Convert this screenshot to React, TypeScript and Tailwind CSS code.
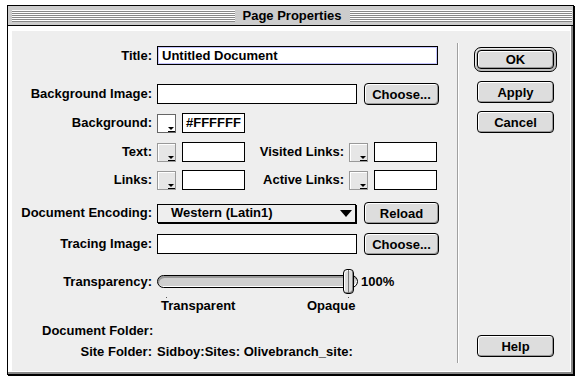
import React from "react";

function Btn({ children, className }: { children: React.ReactNode; className: string }) {
  return (
    <div
      className={
        "flex items-center justify-center border border-black rounded-[4px] bg-[#dddddd] shadow-[inset_1px_1px_0_#ffffff,inset_-1px_-1px_0_#999999] text-[13px] font-bold leading-none " +
        className
      }
    >
      {children}
    </div>
  );
}

function Swatch({ white }: { white?: boolean }) {
  return (
    <div
      className={
        white
          ? "relative w-[19px] h-[19px] border border-[#666666] bg-white shrink-0"
          : "relative w-[19px] h-[19px] border border-[#999999] bg-[#e6e6e6] shadow-[inset_1px_1px_0_#ffffff] shrink-0"
      }
    >
      <div className="absolute right-[1px] bottom-[2px] w-0 h-0 border-l-[3px] border-r-[3px] border-t-[3px] border-l-transparent border-r-transparent border-t-black" />
      <div className="absolute right-0 bottom-0 w-[7px] h-[1px] bg-black" />
    </div>
  );
}

function Field({ w, children }: { w: string; children?: React.ReactNode }) {
  return (
    <div className={"h-[20px] bg-white border border-black flex items-center pl-[3px] shrink-0 " + w}>{children}</div>
  );
}

function Label({ children }: { children: React.ReactNode }) {
  return <div className="w-[140px] text-right shrink-0">{children}</div>;
}

export default function App() {
  return (
    <div className="w-[585px] h-[389px] bg-white pt-[5px] pl-[7px] font-['Liberation_Sans',Arial,sans-serif] text-black text-[13px] font-bold leading-[14px]">
      <div className="w-[567px] h-[370px] border border-black shadow-[1px_1px_0_#000000] flex flex-col bg-[#cccccc]">
        {/* title bar */}
        <div className="h-[20px] border-b border-black flex items-center pl-[4px] pr-[1px] bg-[#cccccc] shrink-0">
          <div className="flex-1 h-[12px] bg-[repeating-linear-gradient(to_bottom,#ffffff_0px,#ffffff_1px,#888888_1px,#888888_2px)]" />
          <div className="mx-[8px] text-[13px] leading-[14px]">Page Properties</div>
          <div className="flex-1 h-[12px] bg-[repeating-linear-gradient(to_bottom,#ffffff_0px,#ffffff_1px,#888888_1px,#888888_2px)]" />
        </div>
        {/* body */}
        <div className="flex-1 bg-white pl-[4px] pt-[5px] pr-[1px] pb-[1px] border-r-2 border-b-2 border-[#888888]">
          <div className="w-[558px] h-[340px] bg-[#eeeeee] flex">
            {/* left form */}
            <div className="w-[445px] flex flex-col shrink-0">
              {/* Title */}
              <div className="mt-[15px] h-[19px] flex items-center gap-[5px]">
                <Label>Title:</Label>
                <div className="w-[281px] h-[19px] bg-white border border-black shadow-[inset_0_0_0_1px_#c4c4ff] flex items-center pl-[4px]">
                  Untitled Document
                </div>
              </div>
              {/* Background image */}
              <div className="mt-[18px] h-[22px] flex items-center gap-[5px]">
                <Label>Background Image:</Label>
                <Field w="w-[200px]" />
                <Btn className="ml-[2px] w-[75px] h-[22px]">Choose...</Btn>
              </div>
              {/* Background */}
              <div className="mt-[8px] h-[20px] flex items-center gap-[5px]">
                <Label>Background:</Label>
                <div className="flex items-center gap-[6px]">
                  <Swatch white />
                  <Field w="w-[63px]">#FFFFFF</Field>
                </div>
              </div>
              {/* Text */}
              <div className="mt-[9px] h-[20px] flex items-center gap-[5px]">
                <Label>Text:</Label>
                <div className="flex items-center gap-[6px]">
                  <Swatch />
                  <Field w="w-[63px]" />
                </div>
                <div className="w-[94px] text-right shrink-0">Visited Links:</div>
                <div className="flex items-center gap-[6px]">
                  <Swatch />
                  <Field w="w-[63px]" />
                </div>
              </div>
              {/* Links */}
              <div className="mt-[8px] h-[20px] flex items-center gap-[5px]">
                <Label>Links:</Label>
                <div className="flex items-center gap-[6px]">
                  <Swatch />
                  <Field w="w-[63px]" />
                </div>
                <div className="w-[94px] text-right shrink-0">Active Links:</div>
                <div className="flex items-center gap-[6px]">
                  <Swatch />
                  <Field w="w-[63px]" />
                </div>
              </div>
              {/* Encoding */}
              <div className="mt-[12px] h-[22px] flex items-center gap-[5px]">
                <Label>Document Encoding:</Label>
                <div className="w-[199px] h-[19px] bg-[#eeeeee] border border-black shadow-[1px_1px_0_#000000] flex items-center justify-between pl-[13px] pr-[3px] shrink-0">
                  <span>Western (Latin1)</span>
                  <span className="w-0 h-0 border-l-[6px] border-r-[6px] border-t-[7px] border-l-transparent border-r-transparent border-t-black" />
                </div>
                <Btn className="ml-[3px] w-[75px] h-[22px]">Reload</Btn>
              </div>
              {/* Tracing image */}
              <div className="mt-[9px] h-[22px] flex items-center gap-[5px]">
                <Label>Tracing Image:</Label>
                <Field w="w-[200px]" />
                <Btn className="ml-[2px] w-[75px] h-[22px]">Choose...</Btn>
              </div>
              {/* Transparency */}
              <div className="mt-[14px] h-[25px] flex items-center gap-[5px]">
                <Label>Transparency:</Label>
                <div className="relative w-[201px] h-[25px] flex items-center shrink-0">
                  <div className="w-[201px] h-[13px] rounded-full border border-black bg-[#cfcfcf] shadow-[inset_1px_2px_0_#999999,inset_-1px_-1px_0_#ffffff]" />
                  <div className="absolute left-[186px] top-0 w-[11px] h-[25px] border border-black rounded-[4px] bg-[#dddddd] shadow-[inset_1px_1px_0_#ffffff,inset_-1px_-1px_0_#888888] flex justify-center">
                    <div className="w-[1px] h-full bg-[#777777]" />
                  </div>
                  <div className="absolute left-[9px] top-[28px] w-[1px] h-[1px] bg-[#555555]" />
                  <div className="absolute left-[191px] top-[28px] w-[1px] h-[1px] bg-[#555555]" />
                </div>
                <div className="ml-[-2px]">100%</div>
              </div>
              {/* Transparent / Opaque */}
              <div className="mt-[5px] h-[14px] flex items-center pl-[149px]">
                <div className="w-[146px] shrink-0">Transparent</div>
                <div>Opaque</div>
              </div>
              {/* Document folder */}
              <div className="mt-[11px] h-[14px] flex items-center pl-[30px]">Document Folder:</div>
              {/* Site folder */}
              <div className="mt-[7px] h-[14px] flex items-center gap-[5px]">
                <Label>Site Folder:</Label>
                <div>Sidboy:Sites: Olivebranch_site:</div>
              </div>
            </div>
            {/* separator */}
            <div className="mt-[12px] mb-[8px] w-[2px] border-l border-r border-l-[#a0a0a0] border-r-white shrink-0" />
            {/* right buttons */}
            <div className="flex-1 flex flex-col pl-[15px]">
              <div className="mt-[16px] w-[83px] h-[25px] border border-black rounded-[7px] bg-[#bbbbbb] shadow-[inset_1px_1px_0_#eeeeee] p-[2px]">
                <Btn className="w-full h-full">OK</Btn>
              </div>
              <Btn className="mt-[9px] ml-[3px] w-[77px] h-[22px]">Apply</Btn>
              <Btn className="mt-[8px] ml-[3px] w-[77px] h-[22px]">Cancel</Btn>
              <Btn className="mt-auto mb-[14px] ml-[3px] w-[77px] h-[22px]">Help</Btn>
            </div>
          </div>
        </div>
      </div>
    </div>
  );
}
